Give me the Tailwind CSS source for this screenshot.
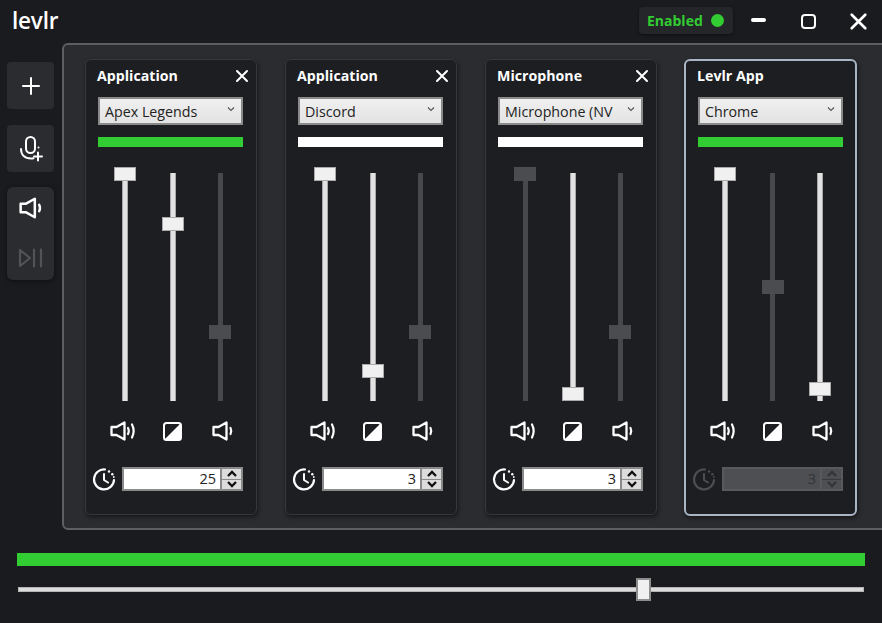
<!DOCTYPE html>
<html><head><meta charset="utf-8"><script src="https://cdn.jsdelivr.net/npm/@tailwindcss/browser@4"></script></head>
<body class="bg-[#1a1b1e]">
<svg class="hidden"><defs>
<symbol id="spk" viewBox="0 0 22 20"><path d="M1.500 6h5L14.500 1.500v17L6.500 14h-5z" fill="none" stroke="currentColor" stroke-width="2.300" stroke-linejoin="round"/><path d="M18.500 7q1.500 3 0 6" fill="none" stroke="currentColor" stroke-width="2.200" stroke-linecap="round"/></symbol>
<symbol id="spkl" viewBox="0 0 26 20"><path d="M1.500 6h5L14.500 1.500v17L6.500 14h-5z" fill="none" stroke="currentColor" stroke-width="2.300" stroke-linejoin="round"/><path d="M18 7q1.500 3 0 6M22 3.500q3.300 6.500 0 13" fill="none" stroke="currentColor" stroke-width="2.200" stroke-linecap="round"/></symbol>
<symbol id="half" viewBox="0 0 19 19"><rect x="1" y="1" width="17" height="17" rx="2.500" fill="none" stroke="currentColor" stroke-width="2"/><path d="M17.500 1.500v16h-16z" fill="currentColor"/></symbol>
<symbol id="clk" viewBox="0 0 24 24"><path d="M13 2.500A10 10 0 1 0 22 13" fill="none" stroke="currentColor" stroke-width="2.200" stroke-linecap="round"/><path d="M12 7v6l4 2.500" fill="none" stroke="currentColor" stroke-width="2" stroke-linecap="round" stroke-linejoin="round"/><circle cx="17" cy="4.500" r="1.200" fill="currentColor"/><circle cx="20.300" cy="7.300" r="1.200" fill="currentColor"/><circle cx="21.800" cy="10" r="0.900" fill="currentColor"/></symbol>
<symbol id="chev" viewBox="0 0 8 6"><path d="M1 1.500l3 3 3-3" fill="none" stroke="currentColor" stroke-width="1.100"/></symbol>
<symbol id="x" viewBox="0 0 14 14"><path d="M2 2l10 10M12 2L2 12" fill="none" stroke="currentColor" stroke-width="2" stroke-linecap="round"/></symbol>
<symbol id="up" viewBox="0 0 12 8"><path d="M2 6l4-4 4 4" fill="none" stroke="currentColor" stroke-width="2.300"/></symbol>
<symbol id="down" viewBox="0 0 12 8"><path d="M2 2l4 4 4-4" fill="none" stroke="currentColor" stroke-width="2.300"/></symbol>
</defs></svg>

<div class="w-[882px] h-[623px] overflow-hidden flex flex-col bg-[#1a1b1e] font-['Open_Sans','Noto_Sans',sans-serif] text-white">
  <!-- title bar -->
  <div class="h-[43px] flex items-center shrink-0">
    <div class="ml-[12px] text-[22.500px] font-semibold leading-none tracking-[-0.2px] -mt-[1px]">levlr</div>
    <div class="ml-auto w-[94px] h-[27px] mt-[-2px] rounded-[4px] bg-[#25262a] shadow-[0_1px_3px_rgba(0,0,0,0.5)] flex items-center pl-[8px]">
      <span class="text-[14px] font-bold text-[#32cd32] leading-none">Enabled</span>
      <span class="ml-auto mr-[9px] w-[13px] h-[13px] rounded-full bg-[#32cd32]"></span>
    </div>
    <div class="w-[50px] flex justify-center mt-[-3px]"><span class="w-[15px] h-[4px] rounded-full bg-white"></span></div>
    <div class="w-[50px] flex justify-center mt-[-1px]"><span class="w-[15px] h-[15px] rounded-[4px] border-2 border-white"></span></div>
    <div class="w-[50px] flex justify-center mr-[-1px] mt-[-1px]"><svg class="w-[19px] h-[19px]"><use href="#x"/></svg></div>
  </div>

  <div class="flex h-[487px] shrink-0">
    <!-- sidebar -->
    <div class="w-[62px] shrink-0 pl-[7px] pt-[19px] flex flex-col">
      <div class="w-[47px] h-[47px] rounded-[4px] bg-[#2b2c30] flex items-center justify-center">
        <svg class="w-[20px] h-[20px]" viewBox="0 0 20 20"><path d="M10 2v16M2 10h16" stroke="currentColor" stroke-width="2" stroke-linecap="round"/></svg>
      </div>
      <div class="w-[47px] h-[47px] mt-[16px] rounded-[4px] bg-[#2b2c30] flex items-center justify-center">
        <svg class="w-[26px] h-[28px]" viewBox="0 0 26 28"><rect x="8" y="2" width="9" height="16" rx="4.500" fill="none" stroke="currentColor" stroke-width="2"/><path d="M3 14c0 6 4 9.500 10 9.500 1 0 1.700-.1 2.500-.3" fill="none" stroke="currentColor" stroke-width="2" stroke-linecap="round"/><path d="M20 17.500v8M16 21.500h8" stroke="currentColor" stroke-width="2" stroke-linecap="round"/><circle cx="20.500" cy="12.500" r="1" fill="currentColor"/></svg>
      </div>
      <div class="w-[47px] h-[93px] mt-[15px] rounded-[6px] bg-[#2b2c30] shadow-[0_1px_4px_rgba(0,0,0,0.5)] flex flex-col items-center pt-[10px]">
        <svg class="w-[24px] h-[22px]"><use href="#spk"/></svg>
        <svg class="w-[26px] h-[22px] mt-[28px] text-[#525357]" viewBox="0 0 26 22"><path d="M2 3v16l10-8z" fill="none" stroke="currentColor" stroke-width="2.200" stroke-linejoin="round"/><path d="M16 2.500v17M23 2.500v17" stroke="currentColor" stroke-width="2.200" stroke-linecap="round"/></svg>
      </div>
    </div>

    <!-- panel -->
    <div class="w-[840px] h-[487px] shrink-0 border-2 border-[#5b5e63] rounded-[6px] bg-[#2b2c30] pl-[21px] pt-[14px] flex gap-[28px]">

      <!-- card 1 -->
      <div class="w-[172px] h-[456px] shrink-0 rounded-[6px] border border-[#36373b] bg-[#1d1e22] shadow-[1px_2px_4px_rgba(0,0,0,0.5)] flex flex-col px-[12px]">
        <div class="h-[33px] mb-[4px] flex items-center justify-between -ml-[1px] -mr-[6px]"><span class="text-[14.200px] font-bold leading-none">Application</span><svg class="w-[14px] h-[14px] -mt-[2px] mr-[1px]"><use href="#x"/></svg></div>
        <div class="w-[145px] h-[28px] border-2 border-[#8a8a8a] bg-gradient-to-b from-[#f0f0f0] to-[#e3e3e3] flex items-center pl-[5px] pr-[6px] text-[#222] text-[14.250px] whitespace-nowrap"><span class="flex-1 mt-[1px]">Apex Legends</span><svg class="w-[8px] h-[6px] ml-[4px] -mt-[4px] text-[#555] shrink-0"><use href="#chev"/></svg></div>
        <div class="w-[145px] h-[10px] mt-[12px] bg-[#32cd32]"></div>
        <div class="flex h-[228px] mt-[26px] ml-[16px] gap-[25.500px]">
          <div class="relative w-[22px] h-full"><div class="mx-auto w-[6px] h-full bg-[#e2e2e2] border-x border-[#a8a8a8]"></div><div class="absolute left-0 top-[-6px] w-[22px] h-[14px] bg-[#f0f0f0] border border-[#aaa]"></div></div>
          <div class="relative w-[22px] h-full"><div class="mx-auto w-[6px] h-full bg-[#e2e2e2] border-x border-[#a8a8a8]"></div><div class="absolute left-0 top-[44px] w-[22px] h-[14px] bg-[#f0f0f0] border border-[#aaa]"></div></div>
          <div class="relative w-[22px] h-full"><div class="mx-auto w-[5px] h-full bg-[#47484b]"></div><div class="absolute left-0 top-[152px] w-[22px] h-[14px] bg-[#4b4c4f]"></div></div>
        </div>
        <div class="flex items-center h-[20px] mt-[20px] ml-[12px]">
          <svg class="w-[26px] h-[20px]"><use href="#spkl"/></svg>
          <svg class="w-[19px] h-[19px] ml-[27px]"><use href="#half"/></svg>
          <svg class="w-[22px] h-[20px] ml-[30px]"><use href="#spk"/></svg>
        </div>
        <div class="flex items-center h-[24px] mt-[26px] -ml-[6px]">
          <svg class="w-[24px] h-[24px] mr-[6px] shrink-0"><use href="#clk"/></svg>
          <div class="w-[100px] h-[24px] border-2 border-[#8a8a8a] bg-white text-[#222] text-[14.500px] leading-none flex items-center justify-end pr-[4px]">25</div>
          <div class="w-[21px] h-[24px] border-2 border-l-0 border-[#8a8a8a] bg-[#8a8a8a] flex flex-col gap-[1px] text-[#111]">
            <div class="flex-1 bg-[#dcdcdc] flex items-center justify-center"><svg class="w-[12px] h-[8px]"><use href="#up"/></svg></div>
            <div class="flex-1 bg-[#dcdcdc] flex items-center justify-center"><svg class="w-[12px] h-[8px]"><use href="#down"/></svg></div>
          </div>
        </div>
      </div>

      <!-- card 2 -->
      <div class="w-[172px] h-[456px] shrink-0 rounded-[6px] border border-[#36373b] bg-[#1d1e22] shadow-[1px_2px_4px_rgba(0,0,0,0.5)] flex flex-col px-[12px]">
        <div class="h-[33px] mb-[4px] flex items-center justify-between -ml-[1px] -mr-[6px]"><span class="text-[14.200px] font-bold leading-none">Application</span><svg class="w-[14px] h-[14px] -mt-[2px] mr-[1px]"><use href="#x"/></svg></div>
        <div class="w-[145px] h-[28px] border-2 border-[#8a8a8a] bg-gradient-to-b from-[#f0f0f0] to-[#e3e3e3] flex items-center pl-[5px] pr-[6px] text-[#222] text-[14.250px] whitespace-nowrap"><span class="flex-1 mt-[1px]">Discord</span><svg class="w-[8px] h-[6px] ml-[4px] -mt-[4px] text-[#555] shrink-0"><use href="#chev"/></svg></div>
        <div class="w-[145px] h-[10px] mt-[12px] bg-white"></div>
        <div class="flex h-[228px] mt-[26px] ml-[16px] gap-[25.500px]">
          <div class="relative w-[22px] h-full"><div class="mx-auto w-[6px] h-full bg-[#e2e2e2] border-x border-[#a8a8a8]"></div><div class="absolute left-0 top-[-6px] w-[22px] h-[14px] bg-[#f0f0f0] border border-[#aaa]"></div></div>
          <div class="relative w-[22px] h-full"><div class="mx-auto w-[6px] h-full bg-[#e2e2e2] border-x border-[#a8a8a8]"></div><div class="absolute left-0 top-[191px] w-[22px] h-[14px] bg-[#f0f0f0] border border-[#aaa]"></div></div>
          <div class="relative w-[22px] h-full"><div class="mx-auto w-[5px] h-full bg-[#47484b]"></div><div class="absolute left-0 top-[152px] w-[22px] h-[14px] bg-[#4b4c4f]"></div></div>
        </div>
        <div class="flex items-center h-[20px] mt-[20px] ml-[12px]">
          <svg class="w-[26px] h-[20px]"><use href="#spkl"/></svg>
          <svg class="w-[19px] h-[19px] ml-[27px]"><use href="#half"/></svg>
          <svg class="w-[22px] h-[20px] ml-[30px]"><use href="#spk"/></svg>
        </div>
        <div class="flex items-center h-[24px] mt-[26px] -ml-[6px]">
          <svg class="w-[24px] h-[24px] mr-[6px] shrink-0"><use href="#clk"/></svg>
          <div class="w-[100px] h-[24px] border-2 border-[#8a8a8a] bg-white text-[#222] text-[14.500px] leading-none flex items-center justify-end pr-[4px]">3</div>
          <div class="w-[21px] h-[24px] border-2 border-l-0 border-[#8a8a8a] bg-[#8a8a8a] flex flex-col gap-[1px] text-[#111]">
            <div class="flex-1 bg-[#dcdcdc] flex items-center justify-center"><svg class="w-[12px] h-[8px]"><use href="#up"/></svg></div>
            <div class="flex-1 bg-[#dcdcdc] flex items-center justify-center"><svg class="w-[12px] h-[8px]"><use href="#down"/></svg></div>
          </div>
        </div>
      </div>

      <!-- card 3 -->
      <div class="w-[172px] h-[456px] shrink-0 rounded-[6px] border border-[#36373b] bg-[#1d1e22] shadow-[1px_2px_4px_rgba(0,0,0,0.5)] flex flex-col px-[12px]">
        <div class="h-[33px] mb-[4px] flex items-center justify-between -ml-[1px] -mr-[6px]"><span class="text-[14.200px] font-bold leading-none">Microphone</span><svg class="w-[14px] h-[14px] -mt-[2px] mr-[1px]"><use href="#x"/></svg></div>
        <div class="w-[145px] h-[28px] border-2 border-[#8a8a8a] bg-gradient-to-b from-[#f0f0f0] to-[#e3e3e3] flex items-center pl-[5px] pr-[6px] text-[#222] text-[14.250px] whitespace-nowrap"><span class="flex-1 mt-[1px]">Microphone (NV</span><svg class="w-[8px] h-[6px] ml-[4px] -mt-[4px] text-[#555] shrink-0"><use href="#chev"/></svg></div>
        <div class="w-[145px] h-[10px] mt-[12px] bg-white"></div>
        <div class="flex h-[228px] mt-[26px] ml-[16px] gap-[25.500px]">
          <div class="relative w-[22px] h-full"><div class="mx-auto w-[5px] h-full bg-[#47484b]"></div><div class="absolute left-0 top-[-6px] w-[22px] h-[14px] bg-[#4b4c4f]"></div></div>
          <div class="relative w-[22px] h-full"><div class="mx-auto w-[6px] h-full bg-[#e2e2e2] border-x border-[#a8a8a8]"></div><div class="absolute left-0 top-[214px] w-[22px] h-[14px] bg-[#f0f0f0] border border-[#aaa]"></div></div>
          <div class="relative w-[22px] h-full"><div class="mx-auto w-[5px] h-full bg-[#47484b]"></div><div class="absolute left-0 top-[152px] w-[22px] h-[14px] bg-[#4b4c4f]"></div></div>
        </div>
        <div class="flex items-center h-[20px] mt-[20px] ml-[12px]">
          <svg class="w-[26px] h-[20px]"><use href="#spkl"/></svg>
          <svg class="w-[19px] h-[19px] ml-[27px]"><use href="#half"/></svg>
          <svg class="w-[22px] h-[20px] ml-[30px]"><use href="#spk"/></svg>
        </div>
        <div class="flex items-center h-[24px] mt-[26px] -ml-[6px]">
          <svg class="w-[24px] h-[24px] mr-[6px] shrink-0"><use href="#clk"/></svg>
          <div class="w-[100px] h-[24px] border-2 border-[#8a8a8a] bg-white text-[#222] text-[14.500px] leading-none flex items-center justify-end pr-[4px]">3</div>
          <div class="w-[21px] h-[24px] border-2 border-l-0 border-[#8a8a8a] bg-[#8a8a8a] flex flex-col gap-[1px] text-[#111]">
            <div class="flex-1 bg-[#dcdcdc] flex items-center justify-center"><svg class="w-[12px] h-[8px]"><use href="#up"/></svg></div>
            <div class="flex-1 bg-[#dcdcdc] flex items-center justify-center"><svg class="w-[12px] h-[8px]"><use href="#down"/></svg></div>
          </div>
        </div>
      </div>

      <!-- card 4 -->
      <div class="w-[173px] h-[457px] shrink-0 rounded-[6px] border-2 border-[#a9b4c4] bg-[#1d1e22] shadow-[1px_2px_4px_rgba(0,0,0,0.5)] flex flex-col px-[12px] -ml-[1px]">
        <div class="h-[31px] mb-[5px] flex items-center justify-between -ml-[1px] -mr-[6px]"><span class="text-[14.200px] font-bold leading-none">Levlr App</span></div>
        <div class="w-[145px] h-[28px] border-2 border-[#8a8a8a] bg-gradient-to-b from-[#f0f0f0] to-[#e3e3e3] flex items-center pl-[5px] pr-[6px] text-[#222] text-[14.250px] whitespace-nowrap"><span class="flex-1 mt-[1px]">Chrome</span><svg class="w-[8px] h-[6px] ml-[4px] -mt-[4px] text-[#555] shrink-0"><use href="#chev"/></svg></div>
        <div class="w-[145px] h-[10px] mt-[12px] bg-[#32cd32]"></div>
        <div class="flex h-[228px] mt-[26px] ml-[16px] gap-[25.500px]">
          <div class="relative w-[22px] h-full"><div class="mx-auto w-[6px] h-full bg-[#e2e2e2] border-x border-[#a8a8a8]"></div><div class="absolute left-0 top-[-6px] w-[22px] h-[14px] bg-[#f0f0f0] border border-[#aaa]"></div></div>
          <div class="relative w-[22px] h-full"><div class="mx-auto w-[5px] h-full bg-[#47484b]"></div><div class="absolute left-0 top-[107px] w-[22px] h-[14px] bg-[#4b4c4f]"></div></div>
          <div class="relative w-[22px] h-full"><div class="mx-auto w-[6px] h-full bg-[#e2e2e2] border-x border-[#a8a8a8]"></div><div class="absolute left-0 top-[209px] w-[22px] h-[14px] bg-[#f0f0f0] border border-[#aaa]"></div></div>
        </div>
        <div class="flex items-center h-[20px] mt-[20px] ml-[12px]">
          <svg class="w-[26px] h-[20px]"><use href="#spkl"/></svg>
          <svg class="w-[19px] h-[19px] ml-[27px]"><use href="#half"/></svg>
          <svg class="w-[22px] h-[20px] ml-[30px]"><use href="#spk"/></svg>
        </div>
        <div class="flex items-center h-[24px] mt-[26px] -ml-[6px] text-[#4d4e51]">
          <svg class="w-[24px] h-[24px] mr-[6px] shrink-0"><use href="#clk"/></svg>
          <div class="w-[100px] h-[24px] bg-[#4e4f52] border-2 border-[#58595c] text-[#333438] text-[14.500px] leading-none flex items-center justify-end pr-[4px]">3</div>
          <div class="w-[21px] h-[24px] border-2 border-l-0 border-[#58595c] bg-[#38393c] flex flex-col gap-[1px] text-[#333438]">
            <div class="flex-1 bg-[#4e4f52] flex items-center justify-center"><svg class="w-[12px] h-[8px]"><use href="#up"/></svg></div>
            <div class="flex-1 bg-[#4e4f52] flex items-center justify-center"><svg class="w-[12px] h-[8px]"><use href="#down"/></svg></div>
          </div>
        </div>
      </div>

    </div>
  </div>

  <!-- master -->
  <div class="ml-[17px] mt-[23px] w-[848px] h-[13px] bg-[#32cd32] shrink-0"></div>
  <div class="relative ml-[18px] mt-[21px] w-[846px] h-[5px] bg-[#dcdcdc] border border-[#b5b5b5] shrink-0">
    <div class="absolute left-[617px] top-[-10px] w-[15px] h-[23px] bg-[#f0f0f0] border-2 border-[#8d8d8d]"></div>
  </div>
</div>
</body></html>
